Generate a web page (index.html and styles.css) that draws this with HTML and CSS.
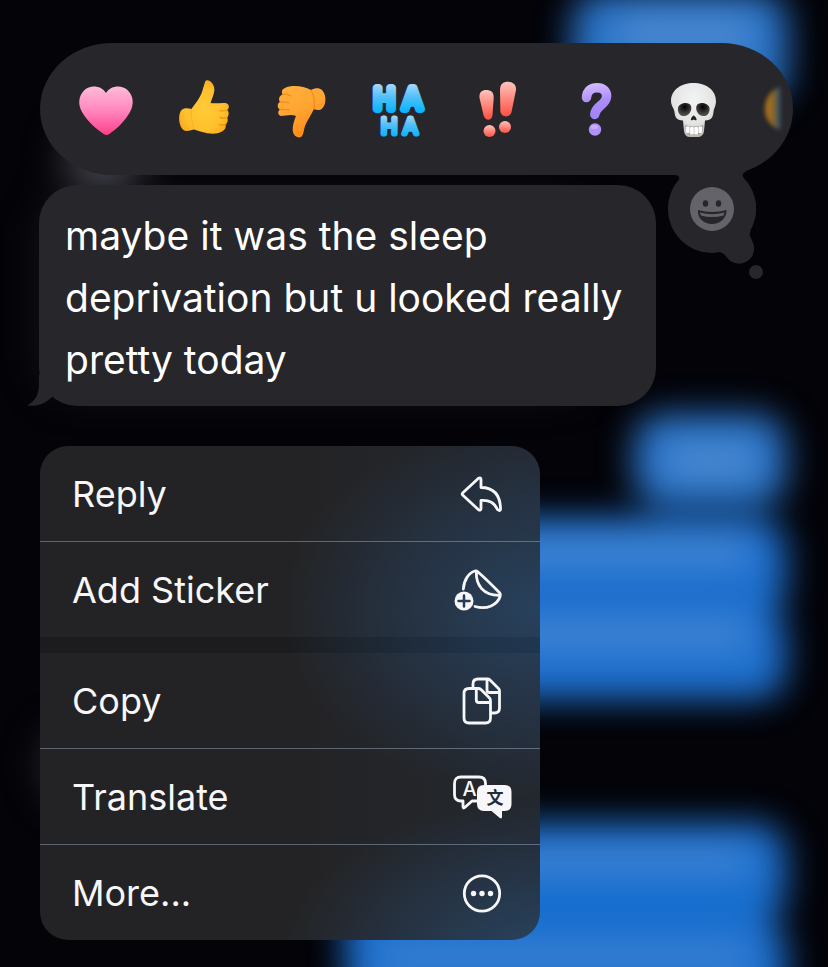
FILE: index.html
```html
<!DOCTYPE html>
<html lang="en">
<head>
<meta charset="utf-8">
<meta name="viewport" content="width=device-width, initial-scale=1">
<title>Message actions</title>
<link rel="stylesheet" href="styles.css">
</head>
<body>
<svg class="backdrop" viewBox="0 0 828 967" preserveAspectRatio="xMaxYMin slice" aria-hidden="true">
  <defs>
    <filter id="soft" x="-50%" y="-50%" width="200%" height="200%" color-interpolation-filters="sRGB"><feGaussianBlur stdDeviation="17"/></filter>
    <filter id="glow" x="-100%" y="-100%" width="300%" height="300%" color-interpolation-filters="sRGB"><feGaussianBlur stdDeviation="20"/></filter>
  </defs>
  <g filter="url(#glow)">
    <rect x="66" y="130" width="74" height="60" rx="30" fill="#4a4a52"/>
    <rect x="44" y="200" width="540" height="190" rx="30" fill="#18181d"/>
    <rect x="46" y="730" width="120" height="70" rx="30" fill="#303036"/>
  </g>
  <g filter="url(#soft)">
    <rect x="572" y="-8" width="216" height="112" rx="30" fill="#2a74c8"/>
    <rect x="634" y="414" width="152" height="92" rx="30" fill="#2a74c8"/>
    <rect x="380" y="518" width="406" height="98" rx="30" fill="#1e70ce"/>
    <rect x="380" y="585" width="386" height="50" fill="#1b6ccc"/>
    <rect x="380" y="606" width="406" height="94" rx="30" fill="#1e70ce"/>
    <rect x="346" y="823" width="440" height="98" rx="30" fill="#1e70ce"/>
    <rect x="344" y="890" width="422" height="60" fill="#146dce"/>
    <rect x="346" y="918" width="440" height="114" rx="30" fill="#1e70ce"/>
  </g>
  <g filter="url(#soft)" fill="#8ab0de" opacity=".36">
    <rect x="620" y="15" width="130" height="36"/>
    <rect x="668" y="444" width="86" height="34"/>
    <rect x="480" y="538" width="268" height="28"/>
    <rect x="480" y="620" width="268" height="28"/>
    <rect x="480" y="850" width="268" height="22"/>
    <rect x="380" y="948" width="368" height="20"/>
  </g>
</svg>

<main class="screen">
  <section class="reactions" aria-label="Reactions">
    <div class="reactions__bar">
      <button class="reaction" aria-label="Heart">
        <svg viewBox="0 0 60 60" aria-hidden="true">
          <defs><linearGradient id="heart" x1="0" y1="0" x2="0" y2="1"><stop offset="0" stop-color="#ffbbd9"/><stop offset=".5" stop-color="#ff86bd"/><stop offset="1" stop-color="#ff3f8c"/></linearGradient></defs>
          <path fill="url(#heart)" d="M30 14C35 6 46 6 51.500 11C58 17 58 26 54 33C49 42 41 50 33 55.200Q30.500 56.800 28 55.200C20 50 11 42 6 33C2 26 2 17 8.500 11C14 6 25 6 30 14Z"/>
        </svg>
      </button>
      <button class="reaction" aria-label="Thumbs up">
        <svg viewBox="0 0 60 60" aria-hidden="true">
          <defs><radialGradient id="up" cx=".5" cy=".55" r=".6"><stop offset="0" stop-color="#ffcb38"/><stop offset=".65" stop-color="#ffc02c"/><stop offset="1" stop-color="#fba51a"/></radialGradient></defs>
          <path fill="url(#up)" d="M31 3C32 .5 35 1 37.500 3.500C41 7 41 12 39 17L36.500 24C41 25 47 23.500 51.500 24C56 25 55.500 29.500 53 31C55.500 33 55 37 53 38.500C54.500 41 53.500 44 51.500 45.500C52.500 49 50.500 51 48 52.500C42 56 34 54.500 28 53L20 50.500C16 51.500 13 52.500 10 51.500C4 47 4 35 7.500 31C10 28.500 14 29 17.500 30C21 25 26 19 28 13Z"/>
          <path fill="none" stroke="#e58a10" stroke-width="1.300" stroke-linecap="round" opacity=".7" d="M46 31.500Q50 32.500 54 31M46 38.500Q50 39.500 53.500 38.500M45 45.500Q48 46.500 52 45.500"/>
          <path fill="none" stroke="#f0a01c" stroke-width="1" stroke-linecap="round" opacity=".5" d="M17.500 30Q16 38 20 50"/>
        </svg>
      </button>
      <button class="reaction" aria-label="Thumbs down">
        <svg viewBox="0 0 60 60" aria-hidden="true">
          <defs><linearGradient id="down" x1="0" y1="0" x2=".5" y2="1"><stop offset="0" stop-color="#ffb13f"/><stop offset=".55" stop-color="#ffa532"/><stop offset="1" stop-color="#ff8a16"/></linearGradient></defs>
          <path fill="url(#down)" d="M13 9C19 6 31 6.500 39 11C43 9 47 8.500 50 11C55 16 54.500 27 49 30.500C46.500 31.500 44 31 42 30C39 36 35 42 33 47C31.500 52 31.500 56 29 58C26 59.500 22 57 21 53C20 47 22.500 41 24 37C19 35 13 37 9 37C5.500 36 5.500 32 8 30.500C4.500 28.500 5.500 24 8 23C6 20 7.500 16.500 10.500 15.500C9 12 10.500 10 13 9Z"/>
          <path fill="none" stroke="#ec7d10" stroke-width="1.300" stroke-linecap="round" opacity=".65" d="M8 30.500Q13 30 17 31M8 23Q13 22.500 17 24M10.500 15.500Q15 14.500 19 17M39 11Q44 20 42 30"/>
        </svg>
      </button>
      <button class="reaction" aria-label="Ha ha">
        <svg viewBox="0 0 60 60" aria-hidden="true">
          <defs>
            <linearGradient id="ha1" gradientUnits="userSpaceOnUse" x1="0" y1="5" x2="0" y2="34"><stop offset="0" stop-color="#a5d8fb"/><stop offset=".45" stop-color="#52bffa"/><stop offset="1" stop-color="#00b4ff"/></linearGradient>
            <linearGradient id="ha2" gradientUnits="userSpaceOnUse" x1="0" y1="36" x2="0" y2="58"><stop offset="0" stop-color="#a5d8fb"/><stop offset=".45" stop-color="#52bffa"/><stop offset="1" stop-color="#00b4ff"/></linearGradient>
          </defs>
          <text class="haha haha--top" x="4 33" y="30" fill="url(#ha1)" stroke="url(#ha1)">HA</text>
          <text class="haha haha--bottom" x="11 33" y="55" fill="url(#ha2)" stroke="url(#ha2)">HA</text>
        </svg>
      </button>
      <button class="reaction" aria-label="Emphasize">
        <svg viewBox="0 0 60 60" aria-hidden="true">
          <defs><linearGradient id="bang" x1="0" y1="0" x2="0" y2="1"><stop offset="0" stop-color="#ffc4bc"/><stop offset=".55" stop-color="#ff8377"/><stop offset="1" stop-color="#ff4f43"/></linearGradient></defs>
          <g fill="url(#bang)">
            <path d="M11.500 19C11 13 14 11 18 11C23 11 26 13 25.700 19L24.500 36C24 42 17 42.500 15.500 36Z"/>
            <path d="M32 11C32 5 35 2.700 40 2.700C45 2.700 48.500 6 48 11L43.500 33C42 39 33 39 32.300 32Z"/>
            <circle cx="21.500" cy="52" r="6"/><circle cx="37" cy="48" r="6"/>
          </g>
        </svg>
      </button>
      <button class="reaction" aria-label="Question">
        <svg viewBox="0 0 60 60" aria-hidden="true">
          <defs><linearGradient id="ask" gradientUnits="userSpaceOnUse" x1="26" y1="4" x2="34" y2="56"><stop offset="0" stop-color="#d6bcff"/><stop offset=".35" stop-color="#ab8dfb"/><stop offset="1" stop-color="#9a79f5"/></linearGradient></defs>
          <path fill="none" stroke="url(#ask)" stroke-width="9.500" stroke-linecap="round" stroke-linejoin="round" d="M20.500 18.500C21 11 26 8.700 31 8.700C38 8.700 41 13 40.500 18C40 26 29.500 26.500 28.800 35.500"/>
          <circle cx="29" cy="50.500" r="6.200" fill="#b291fb"/><ellipse cx="28.500" cy="48" rx="3.500" ry="2" fill="#d6bcff" opacity=".7"/>
        </svg>
      </button>
      <button class="reaction" aria-label="Skull">
        <svg viewBox="0 0 60 60" aria-hidden="true">
          <defs>
            <radialGradient id="bone" cx=".5" cy=".3" r=".7"><stop offset="0" stop-color="#f2f4f4"/><stop offset=".65" stop-color="#e3e4e4"/><stop offset="1" stop-color="#b9b7b4"/></radialGradient>
            <radialGradient id="socket" cx=".5" cy=".3" r=".7"><stop offset="0" stop-color="#000"/><stop offset="1" stop-color="#5b5956"/></radialGradient>
          </defs>
          <path fill="url(#bone)" d="M29.500 4C42 4 52 11 52 22C52 27 50 29 49.500 33C49 38 48 41 41 41.500L40 52C39.500 56 37 58 33.500 58H26C22.500 58 20.500 56 20 52L19 41.500C12 41 11 38 10.500 33C10 29 7 27 7 22C7 11 17 4 29.500 4Z"/>
          <path fill="url(#socket)" d="M14 29C15 24 25 22 27 27C28.500 31 25 37 20.500 37C16 37.500 13.500 34 14 29Z"/>
          <path fill="url(#socket)" d="M45.500 29C44.500 24 34.500 22 32.500 27C31 31 34.500 37 39 37C43.500 37.500 46 34 45.500 29Z"/>
          <path fill="#26211e" d="M29.700 36.500C31 37 33 39.500 32.500 41C31.500 42 30.500 40.500 29.700 40.500C29 40.500 28 42 27 41C26.500 39.500 28.500 37 29.700 36.500Z"/>
          <path fill="#aaa5a0" d="M21 46Q30 49 39.500 46L38.500 53Q36 56 33 56H27Q23 56 22 53Z"/>
          <g fill="#fff"><rect x="22" y="47.500" width="3.600" height="6.500" rx="1"/><rect x="26.100" y="48" width="3.700" height="7.500" rx="1"/><rect x="30.300" y="48" width="3.700" height="7.500" rx="1"/><rect x="34.500" y="47.500" width="3.600" height="6.500" rx="1"/></g>
        </svg>
      </button>
      <button class="reaction reaction--fading" aria-label="More reactions">
        <svg viewBox="0 0 60 60" aria-hidden="true">
          <defs><linearGradient id="edge" gradientUnits="userSpaceOnUse" x1="2" y1="0" x2="21" y2="0"><stop offset="0" stop-color="#b87818"/><stop offset=".5" stop-color="#8a6426"/><stop offset=".75" stop-color="#3f5a68"/><stop offset="1" stop-color="#27262b"/></linearGradient></defs>
          <path fill="url(#edge)" d="M19 8C8 10 3 20 3 30C3 40 9 49 19 51Z"/>
        </svg>
      </button>
    </div>
    <button class="thought" aria-label="Choose an emoji">
      <svg viewBox="0 0 110 115" aria-hidden="true">
        <path fill="#27262b" d="M12 0V10H15Q21 11 18.500 15A44 44 0 1 0 88 18Q80 10 84 8L92 0Z"/>
        <circle cx="52" cy="44" r="44" fill="#27262b"/>
        <path fill="#27262b" d="M91 66Q88 70 92 75L94 83A15 15 0 0 1 66 91Q63 88 60 87L70 60Z"/>
        <circle cx="79" cy="83.500" r="15" fill="#27262b"/>
        <circle cx="96" cy="107" r="7" fill="#27262b"/>
        <circle cx="52" cy="44" r="22" fill="#646369"/>
        <ellipse cx="45.500" cy="38.500" rx="2.700" ry="3.200" fill="#27262b"/><ellipse cx="58.500" cy="38.500" rx="2.700" ry="3.200" fill="#27262b"/>
        <path fill="#27262b" d="M38 45Q52 49 66.500 45C67 53 60 59 52 59C44 59 37 53 38 45Z"/>
        <path fill="#646369" d="M39.800 47.500Q52 51 64.500 47.500L63.500 50.500Q52 53.500 41 50.500Z"/>
      </svg>
    </button>
  </section>

  <article class="message">
    <p class="message__text">maybe it was the sleep deprivation but u looked really pretty today</p>
    <svg class="message__tail" viewBox="0 0 30 31" aria-hidden="true"><path fill="#27262b" d="M12 0V9C12 20 8 26 0 30.500C12 32 19 28 26 21L30 0Z"/></svg>
  </article>

  <nav class="menu" aria-label="Message menu">
    <div class="menu__group">
      <button class="menu__item"><span>Reply</span>
        <svg class="icon" viewBox="0 0 60 60" aria-hidden="true"><path d="M10.600 29Q9.800 30 10.600 31L26.500 45.700Q29 47 29 44.500V36.500C38 36 42 38.500 45.500 45.500Q48.500 48 48.600 44.500C48 31 42 23.500 29 23.500V15.500Q29 13 26.500 14.300Z"/></svg>
      </button>
      <button class="menu__item"><span>Add Sticker</span>
        <svg class="icon" viewBox="0 0 60 60" aria-hidden="true"><path d="M11.300 29C12 20 16.500 13 23 11Q24.500 10.700 26 12C33 18 41 26 47.800 33Q49 34.500 48.300 36C45.500 45 35 50 23 46.500M24.300 12C24 25 31 35.500 47.500 35.300"/><circle class="icon__solid" cx="12" cy="41" r="9.500"/><path class="icon__cut" d="M12 35.500V46.500M6.500 41H17.500"/></svg>
      </button>
    </div>
    <div class="menu__group">
      <button class="menu__item"><span>Copy</span>
        <svg class="icon" viewBox="0 0 60 60" aria-hidden="true"><path d="M21 16V13Q21 8 26 8H35.500Q37 8 38 9L46.500 17.500Q47.500 18.500 47.500 20V37Q47.500 42 42.500 42H39.500M35 9V19Q35 21.500 37.500 21.500H47M17 17.500H26Q28 17.500 29 18.500L37.500 27Q38.500 28 38.500 30V47Q38.500 52 33.500 52H17Q12 52 12 47V22.500Q12 17.500 17 17.500ZM24.300 18V29Q24.300 31.500 26.800 31.500H38"/></svg>
      </button>
      <button class="menu__item"><span>Translate</span>
        <svg class="icon" viewBox="0 0 60 60" aria-hidden="true"><path d="M33.500 18V16.500Q33.500 10 27 10H9Q2.500 10 2.500 16.500V27.500Q2.500 34 9 34H11V39.500Q11 42 13 40.300L20 34H26"/><path class="icon__solid" d="M32 18H52.500Q59.500 18 59.500 25V37Q59.500 44 52.500 44H50V49.500Q50 52.500 47.500 50.700L39.500 44H32Q25 44 25 37V25Q25 18 32 18Z"/><text class="icon__latin" x="17.500" y="29">A</text><text class="icon__han" x="43" y="37">文</text></svg>
      </button>
      <button class="menu__item"><span>More...</span>
        <svg class="icon" viewBox="0 0 60 60" aria-hidden="true"><circle cx="30" cy="30.500" r="17.700"/><g class="icon__solid"><circle cx="21.500" cy="30.500" r="2.700"/><circle cx="30" cy="30.500" r="2.700"/><circle cx="38.500" cy="30.500" r="2.700"/></g></svg>
      </button>
    </div>
  </nav>
</main>
</body>
</html>
```

FILE: styles.css
```css
* { box-sizing: border-box; }

body {
  margin: 0;
  min-height: 100vh;
  position: relative;
  overflow: hidden;
  background: #030308;
  color: #fff;
  font-family: Inter, "Liberation Sans", sans-serif;
}

button {
  margin: 0;
  padding: 0;
  border: 0;
  background: none;
  color: inherit;
  font: inherit;
  text-align: left;
}

svg {
  display: block;
  overflow: visible;
}

.backdrop {
  position: absolute;
  inset: 0;
  width: 100%;
  height: 100%;
}

.screen {
  position: relative;
  padding: 43px 35px 27px 40px;
}

.reactions { position: relative; }

.reactions__bar {
  display: flex;
  height: 132px;
  padding-left: 17px;
  align-items: center;
  overflow: hidden;
  border-radius: 72px / 66px;
  background: #27262b;
}

.reaction {
  flex: none;
  width: 98px;
  padding: 0 19px;
}

.reaction--fading { filter: blur(2px); }

.haha {
  font-weight: 300;
  line-height: 1;
  stroke-linejoin: round;
}

.haha--top { font-size: 28px; stroke-width: 8px; }
.haha--bottom { font-size: 22px; stroke-width: 5px; }

.thought {
  position: absolute;
  top: 122px;
  right: 23px;
  width: 110px;
}

.message {
  position: relative;
  width: fit-content;
  max-width: 617px;
  margin: 10px 0 0 -1px;
  padding: 20px 26px 15px;
  border-radius: 38px;
  background: #27262b;
}

.message__text {
  margin: 0;
  font-size: 39px;
  line-height: 62px;
}

.message__tail {
  position: absolute;
  left: -12px;
  bottom: 0;
  width: 30px;
}

.menu {
  display: grid;
  gap: 16px;
  max-width: 500px;
  margin-top: 40px;
  overflow: hidden;
  border-radius: 28px;
  background:
    radial-gradient(260px 190px at 100% 33%, #213b58, rgba(33, 59, 88, 0)),
    radial-gradient(260px 160px at 100% 104%, #213e5c, rgba(33, 62, 92, 0)),
    linear-gradient(90deg, #1c1c1e 50%, #1c2128);
}

.menu__group { background: rgba(255, 255, 255, 0.03); }

.menu__item {
  display: flex;
  width: 100%;
  height: 95px;
  padding: 0 28px 0 32px;
  align-items: center;
  justify-content: space-between;
  color: #f7f7f9;
  font-size: 36px;
}

.menu__item + .menu__item {
  height: 96px;
  border-top: 1px solid rgba(190, 210, 240, 0.38);
}

.icon {
  width: 60px;
  height: 60px;
  fill: none;
  stroke: #f7f7f9;
  stroke-width: 2.8px;
  stroke-linecap: round;
  stroke-linejoin: round;
}

.icon__solid { fill: #f7f7f9; stroke: none; }
.icon__cut { stroke: #243c56; stroke-width: 2.5px; }

.icon__latin,
.icon__han {
  fill: #f7f7f9;
  stroke: none;
  font-size: 20px;
  font-weight: 500;
  text-anchor: middle;
}

.icon__han {
  fill: #232b35;
  font-family: "Noto Sans CJK SC", sans-serif;
  font-size: 17px;
  font-weight: 700;
}
```
